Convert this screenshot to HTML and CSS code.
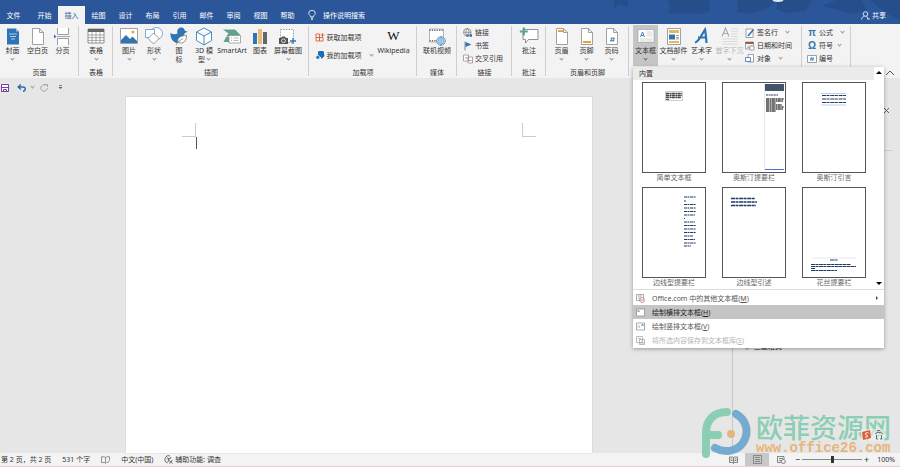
FILE: index.html
```html
<!DOCTYPE html>
<html lang="zh-CN">
<head>
  <meta charset="UTF-8">
  <title>Word</title>
  <meta name="viewport" content="width=device-width, initial-scale=1.0">
  <link rel="stylesheet" href="styles.css">
</head>
<body>

  <!-- Title bar and tabs -->
  <header class="topbar">
    <svg class="topbar-art" width="300" height="24" viewBox="0 0 300 24">
      <path d="M14 0h14v7l-8-2-6 3zM68 0h41l1 11-8 3-34-1 2-6zM138 0h38l-7 8-18 6-14-2zM178 0h34l-6 11-22 2-8-4zM222 6l14-6h26l5 11-15 3zM270 0h30v20l-14-7z" fill="#264e8a"/>
      <path d="M173 0q5 2 10 0" stroke="#dfe7f3" stroke-width="2" fill="none"/>
    </svg>
    <nav class="tabs">
      <button class="tab tab-file">文件</button>
      <button class="tab">开始</button>
      <button class="tab active">插入</button>
      <button class="tab">绘图</button>
      <button class="tab">设计</button>
      <button class="tab">布局</button>
      <button class="tab">引用</button>
      <button class="tab">邮件</button>
      <button class="tab">审阅</button>
      <button class="tab">视图</button>
      <button class="tab">帮助</button>
    </nav>
    <label class="search">
      <svg width="8" height="10" viewBox="0 0 8 10" fill="none" stroke="#fff" stroke-width=".8"><path d="M2.700 7V6C1 5 .7 4 .7 3.400a3.300 3 0 0 1 6.600 0C7.300 4 7 5 5.300 6v1zM2.700 8h2.600M3 9.400h2"/></svg>
      <input type="text" placeholder="操作说明搜索" aria-label="操作说明搜索">
    </label>
    <button class="share">
      <svg width="9" height="9" viewBox="0 0 9 9" fill="none" stroke="#fff" stroke-width=".8"><circle cx="4.500" cy="3" r="2.300"/><path d="M.5 8.500C.8 6.500 2 5.500 3.500 5.200M5.500 5.200l2 3M6 8h2.800"/></svg>
      共享
    </button>
  </header>

  <!-- Ribbon -->
  <div class="ribbon">
    <section class="group g-pages">
      <div class="group-body">
        <button class="big">
          <svg width="20" height="20" viewBox="0 0 20 20"><path d="M4 2.500h9l3 3V18.500H4z" fill="#2e75b6"/><path d="M13 2.500v3h3" fill="#9cc3e6"/><path d="M6 8h8M7 10.500h6M8 13h4" stroke="#cfe2f3" stroke-width=".8"/></svg>
          <span>封面</span><i class="chev"></i>
        </button>
        <button class="big">
          <svg width="20" height="20" viewBox="0 0 20 20"><path d="M4.500 2.500h7l4 4v12h-11zM11.500 2.500v4h4" fill="#fff" stroke="#8a8a8a" stroke-width=".8"/></svg>
          <span>空白页</span>
        </button>
        <button class="big">
          <svg width="20" height="20" viewBox="0 0 20 20"><path d="M4.500 2v6.500h11V2M4.500 19v-6.500h11V19" fill="#fff" stroke="#8a8a8a" stroke-width=".8"/><path d="M4 10.500h13" stroke="#8a8a8a" stroke-width=".7"/><path d="M1 8.500l2.500 2-2.500 2z" fill="#2e75b6"/></svg>
          <span>分页</span>
        </button>
      </div>
      <h2>页面</h2>
    </section>

    <section class="group g-table">
      <div class="group-body">
        <button class="big">
          <svg width="20" height="20" viewBox="0 0 20 20"><path d="M2 3h16v14H2z" fill="#fff" stroke="#777" stroke-width=".8"/><path d="M2 3h16v3H2z" fill="#666"/><path d="M2 9h16M2 11.700h16M2 14.400h16M6 6v11M10 6v11M14 6v11" stroke="#888" stroke-width=".7"/></svg>
          <span>表格</span><i class="chev"></i>
        </button>
      </div>
      <h2>表格</h2>
    </section>

    <section class="group g-illus">
      <div class="group-body">
        <button class="big">
          <svg width="20" height="20" viewBox="0 0 20 20"><path d="M1.500 2.500h17v15h-17z" fill="#fff" stroke="#8a8a8a" stroke-width=".8"/><path d="M2 17v-3l5-5 4 4 2.500-2.500L18 15v2z" fill="#2e75b6"/><circle cx="14" cy="6" r="1.500" fill="#e8a33d"/></svg>
          <span>图片</span><i class="chev"></i>
        </button>
        <button class="big">
          <svg width="20" height="20" viewBox="0 0 20 20" fill="#fff" stroke="#4a8ac4" stroke-width=".7"><circle cx="12.500" cy="7.500" r="6"/><path d="M1.500 3.500h9v8h-9z"/><path d="M9.500 7l5.500 5.500-5.500 5.500L4 12.500z" stroke="#777"/></svg>
          <span>形状</span><i class="chev"></i>
        </button>
        <button class="big">
          <svg width="20" height="20" viewBox="0 0 20 20"><path d="M1.500 7c2.500 1.500 5 1.500 7 .5C7.500 4 9.500 1.500 12.300 1.500c2.200 0 3.400 1.400 3.500 3.200l3 1-3 1.300c-.3 1.500-1.300 2.500-1.300 3.500L8.500 17C4 16.500 1 12 1.500 7z" fill="#2e75b6"/><path d="M7 19l2-3C7.500 12 12 9.500 17.500 9.500 17.500 15 14 19 9 16l5-3.500" fill="#fff" stroke="#777" stroke-width=".8"/></svg>
          <span>图<br>标</span>
        </button>
        <button class="big">
          <svg width="20" height="20" viewBox="0 0 20 20" fill="#fff" stroke="#2e86c1" stroke-width=".9"><path d="M10 2l7.500 4v8.500L10 19l-7.500-4.500V6zM2.500 6l7.500 4 7.500-4M10 10v9"/></svg>
          <span>3D 模<br>型 <i class="chev"></i></span>
        </button>
        <button class="big wide">
          <svg width="20" height="20" viewBox="0 0 20 20"><path d="M1 3.500h12l5 5-2 2H4l2.500-3z" fill="#5fa58c"/><path d="M4 11h4v5H1.500z" fill="#5fa58c"/><path d="M7 9.500h11.500v7.500H7z" fill="#fff" stroke="#8a8a8a" stroke-width=".7"/><path d="M9 12h1M11.500 12h5M9 14.500h1M11.500 14.500h5" stroke="#999" stroke-width=".7"/></svg>
          <span>SmartArt</span>
        </button>
        <button class="big">
          <svg width="20" height="20" viewBox="0 0 20 20"><path d="M3 7h4v11H3z" fill="#2e75b6"/><path d="M8 3h4v15H8z" fill="#e8bd73"/><path d="M13 6h4v12h-4z" fill="#666"/></svg>
          <span>图表</span>
        </button>
        <button class="big wide">
          <svg width="20" height="20" viewBox="0 0 20 20"><path d="M2.500 3.500h13v13h-13z" fill="#fff" stroke="#777" stroke-width=".7" stroke-dasharray="1.500 1.200"/><path d="M1 12h2l1-1.500h3L8 12h2v6H1z" fill="#555"/><circle cx="5.500" cy="14.800" r="1.900" fill="#555" stroke="#fff" stroke-width=".8"/><path d="M12 15h6M15 12v6" stroke="#2e75b6" stroke-width="1.300"/></svg>
          <span>屏幕截图</span><i class="chev"></i>
        </button>
      </div>
      <h2>插图</h2>
    </section>

    <section class="group g-addins">
      <div class="group-body">
        <div class="rows two">
          <button class="small">
            <svg width="10" height="10" viewBox="0 0 10 10" fill="none" stroke="#d9603b" stroke-width=".9"><path d="M1 2h3.500v3.500H1zM1 5.500h3.500V9H1zM4.500 5.500H8V9H4.500zM5.500 3h4M7.500 1v4"/></svg>
            <span>获取加载项</span>
          </button>
          <button class="small">
            <svg width="10" height="10" viewBox="0 0 10 10"><path d="M3.500 1h5l1 5-3 3-1-3-2.500-1z" fill="#1b6fb8"/><circle cx="6" cy="4" r="3" fill="#1b6fb8"/><circle cx="2.800" cy="7.300" r="1.900" fill="#1b6fb8" stroke="#f3f3f3" stroke-width=".6"/></svg>
            <span>我的加载项</span><i class="chev far"></i>
          </button>
        </div>
        <button class="big wiki">
          <span class="wiki-w">W</span>
          <span>Wikipedia</span>
        </button>
      </div>
      <h2>加载项</h2>
    </section>

    <section class="group g-media">
      <div class="group-body">
        <button class="big wide">
          <svg width="20" height="20" viewBox="0 0 20 20"><path d="M2.500 3h14v13h-14z" fill="#fff" stroke="#999" stroke-width=".7"/><path d="M2.500 4.300h14M2.500 14.700h8" stroke="#666" stroke-width="1.400" stroke-dasharray="1.200 1.200"/><circle cx="14" cy="15" r="4.300" fill="#fff" stroke="#3f86bf" stroke-width=".8"/><path d="M9.700 15h8.600M14 10.700v8.600M10.500 13h7M10.500 17h7M14 10.700c-3 2-3 6.600 0 8.600c3-2 3-6.600 0-8.600" fill="none" stroke="#3f86bf" stroke-width=".6"/></svg>
          <span>联机视频</span>
        </button>
      </div>
      <h2>媒体</h2>
    </section>

    <section class="group g-links">
      <div class="group-body">
        <div class="rows">
          <button class="small">
            <svg width="10" height="10" viewBox="0 0 10 10" fill="none" stroke="#777" stroke-width=".7"><circle cx="4.300" cy="4.300" r="3.800"/><path d="M.5 4.300h7.600M4.300.5c-2 2-2 5.500 0 7.600M4.300.5c2 2 2 4 1 6"/><path d="M3.500 7.500h2M6.500 7.500h2.500" stroke="#2e75b6" stroke-width="2.400"/></svg>
            <span>链接</span>
          </button>
          <button class="small">
            <svg width="10" height="10" viewBox="0 0 10 10"><path d="M2 .500v9" stroke="#888"/><path d="M2.500 1l6 2.500-6 2.500z" fill="#2e75b6"/></svg>
            <span>书签</span>
          </button>
          <button class="small">
            <svg width="10" height="10" viewBox="0 0 10 10" fill="#fff" stroke="#888" stroke-width=".7"><path d="M.5 1h5v6h-5zM5 3h4.500v6H5z"/><path d="M2 4h3M6 6.500h2.500" stroke="#c0504d"/></svg>
            <span>交叉引用</span>
          </button>
        </div>
      </div>
      <h2>链接</h2>
    </section>

    <section class="group g-comment">
      <div class="group-body">
        <button class="big">
          <svg width="20" height="20" viewBox="0 0 20 20"><path d="M4 3.500h15v10H9.500l-3 3.500v-3.500H4z" fill="#fff" stroke="#777" stroke-width=".8"/><path d="M.8 5.500h8M4.800 1.500v8" stroke="#5fa58c" stroke-width="2.200"/></svg>
          <span>批注</span>
        </button>
      </div>
      <h2>批注</h2>
    </section>

    <section class="group g-hf">
      <div class="group-body">
        <button class="big">
          <svg width="20" height="20" viewBox="0 0 20 20"><path d="M4.500 2.500h7l4 4v12h-11zM11.500 2.500v4h4" fill="#fff" stroke="#8a8a8a" stroke-width=".8"/><path d="M6 4h5v2H6z" fill="#e8a33d"/></svg>
          <span>页眉</span><i class="chev"></i>
        </button>
        <button class="big">
          <svg width="20" height="20" viewBox="0 0 20 20"><path d="M4.500 2.500h7l4 4v12h-11zM11.500 2.500v4h4" fill="#fff" stroke="#8a8a8a" stroke-width=".8"/><path d="M6 15h8v2H6z" fill="#e8a33d"/></svg>
          <span>页脚</span><i class="chev"></i>
        </button>
        <button class="big">
          <svg width="20" height="20" viewBox="0 0 20 20"><path d="M4.500 2.500h7l4 4v12h-11zM11.500 2.500v4h4" fill="#fff" stroke="#8a8a8a" stroke-width=".8"/><path d="M10 11l-1 5M12 11l-1 5M8.500 12.700h4.500M8 14.500h4.500" stroke="#2e75b6" stroke-width=".7"/></svg>
          <span>页码</span><i class="chev"></i>
        </button>
      </div>
      <h2>页眉和页脚</h2>
    </section>

    <section class="group g-text">
      <div class="group-body">
        <div class="dropdown">
          <button class="big pressed">
            <svg width="20" height="20" viewBox="0 0 20 20"><path d="M2 3.500h16v13H2z" fill="#fff" stroke="#999" stroke-width=".6"/><path d="M4.500 11L6.500 6l2 5M5.200 9.500h2.600" stroke="#2e75b6" fill="none" stroke-width=".9"/><path d="M10.500 6h6M10.500 8h6M10.500 10h6M4 13h12.500M4 15h12.500" stroke="#ccc" stroke-width=".8"/></svg>
            <span>文本框</span><i class="chev"></i>
          </button>

          <!-- Text box gallery -->
          <div class="menu">
            <div class="gallery">
              <h3>内置</h3>
              <div class="thumbs">
                <button class="thumb">
                  <svg width="64" height="91" viewBox="0 0 64 91"><path d="M23.500 9.500h17v9h-17z" fill="#fff" stroke="#aaa" stroke-width=".6"/><path d="M24 11.500h16M24 13.500h16M24 15.500h15" stroke="#444" stroke-width="1.300" stroke-dasharray="3 .5 2 .4"/><path d="M24 17.500h3" stroke="#555"/></svg>
                  <span>简单文本框</span>
                </button>
                <button class="thumb">
                  <svg width="64" height="91" viewBox="0 0 64 91"><path d="M42.500 2v86" stroke="#d5dbe6" stroke-width=".6"/><path d="M43 2h19v7H43z" fill="#44546a"/><path d="M44 13h12" stroke="#1f3864" stroke-dasharray="2 .6"/><path d="M44 17h18M44 19h17M44 21h10M44 23h16M44 25h18M44 27h17M44 29h10" stroke="#444" stroke-width="1.300" stroke-dasharray="3 .5 2 .4"/><path d="M43 87.500h19" stroke="#4472c4"/></svg>
                  <span>奥斯汀提要栏</span>
                </button>
                <button class="thumb">
                  <svg width="64" height="91" viewBox="0 0 64 91"><path d="M19 11.500h25M19 23h25" stroke="#a9bce0" stroke-width=".7"/><path d="M20 13.500h24M20 17h24M20 20.500h24" stroke="#1f3864" stroke-width="1.200" stroke-dasharray="4 .5 3 .8"/></svg>
                  <span>奥斯汀引言</span>
                </button>
                <button class="thumb">
                  <svg width="64" height="91" viewBox="0 0 64 91"><path d="M42 10h12M42 14h2M42 17.500h12M42 21h12M42 24.500h12M42 28h11M42 31.500h1M42 35h11M42 38.500h12M42 42h12M42 45.500h12M42 49h9M42 52.500h11M42 56h12M42 59h7" stroke="#1f3864" stroke-width="1.200" stroke-dasharray="3 .5 2 .6"/></svg>
                  <span>边线型提要栏</span>
                </button>
                <button class="thumb">
                  <svg width="64" height="91" viewBox="0 0 64 91"><path d="M9 11.500h24M9 15h26M9 18.500h25" stroke="#1f3864" stroke-width="1.300" stroke-dasharray="4 .5 3 .6"/></svg>
                  <span>边线型引述</span>
                </button>
                <button class="thumb">
                  <svg width="64" height="91" viewBox="0 0 64 91"><path d="M10 71h44" stroke="#d5dbe6" stroke-width=".6"/><path d="M28 73h8M9 77.500h40M9 79.500h45M9 81.500h4M9 83.500h26" stroke="#1f3864" stroke-width="1.200" stroke-dasharray="4 .4 3 .5"/></svg>
                  <span>花丝提要栏</span>
                </button>
              </div>
              <div class="scroll"><i class="up"></i><i class="down"></i></div>
            </div>
            <div class="menu-items">
              <button class="item">
                <svg width="9" height="9" viewBox="0 0 9 9" fill="#fff" stroke="#888" stroke-width=".7"><path d="M.5.500h7v6h-7zM2 2h4M2 4h3"/><circle cx="6" cy="6" r="2.400" stroke="#b66"/><path d="M4 6h4"/></svg>
                <span>Office.com 中的其他文本框(<u>M</u>)</span><i class="sub"></i>
              </button>
              <button class="item hover">
                <svg width="9" height="9" viewBox="0 0 9 9" fill="#fff" stroke="#888" stroke-width=".7"><path d="M.5 1h8v7h-8z"/><path d="M1.500 4l1-2 1 2" stroke="#2e75b6"/></svg>
                <span>绘制横排文本框(<u>H</u>)</span>
              </button>
              <button class="item">
                <svg width="9" height="9" viewBox="0 0 9 9" fill="#fff" stroke="#888" stroke-width=".7"><path d="M.5 1h8v7h-8z"/><path d="M5.500 4l1-2 1 2" stroke="#2e75b6"/><path d="M2 3v3M3.500 3v3" stroke="#bbb"/></svg>
                <span>绘制竖排文本框(<u>V</u>)</span>
              </button>
              <button class="item" disabled>
                <svg width="9" height="9" viewBox="0 0 9 9" fill="#fff" stroke="#aaa" stroke-width=".8"><path d="M.5.500h6v6h-6zM2 2.500h3M3.500 3.500h5v5h-5zM5 8V6h2v2"/></svg>
                <span>将所选内容保存到文本框库(<u>S</u>)</span>
              </button>
            </div>
          </div>
        </div>
        <button class="big wide">
          <svg width="20" height="20" viewBox="0 0 20 20"><path d="M3.500 2.500h13v16h-13z" fill="#fff" stroke="#8a8a8a" stroke-width=".8"/><path d="M5 4h10v3H5zM5 15h10v2H5z" fill="#e8b560"/><path d="M5 8.500h6v5H5z" fill="#2e75b6"/><path d="M12 9.500h3M12 11.500h3M12 13h3" stroke="#777" stroke-width=".7"/></svg>
          <span>文档部件</span><i class="chev"></i>
        </button>
        <button class="big">
          <svg width="20" height="20" viewBox="0 0 20 20" fill="none" stroke="#2e75b6" stroke-width="2.200"><path d="M3 16.500C7 16 10 8 13 3.500c1 4 1 8 1.500 13.500M6 11.500h8"/></svg>
          <span>艺术字</span><i class="chev"></i>
        </button>
        <button class="big wide" disabled>
          <svg width="20" height="20" viewBox="0 0 20 20" fill="none" stroke="#aaa" stroke-width="1.100"><path d="M2 10.500L5.500 2l3.500 8.500M3.300 7.500h4.400"/><path d="M11 3h7M11 5.500h7M11 8h7M11 10.500h7M2 13h16M2 15.500h16M2 18h16" stroke="#dcdcdc"/></svg>
          <span>首字下沉</span><i class="chev"></i>
        </button>
        <div class="rows">
          <button class="small">
            <svg width="10" height="10" viewBox="0 0 10 10"><path d="M1 1h7v8.500H1z" fill="#fff" stroke="#888" stroke-width=".8"/><path d="M3 8l5.500-6.500" stroke="#2e75b6" stroke-width="1.600"/></svg>
            <span>签名行</span><i class="chev far"></i>
          </button>
          <button class="small">
            <svg width="10" height="10" viewBox="0 0 10 10"><path d="M.5 1h8v7h-8z" fill="#fff" stroke="#888" stroke-width=".8"/><path d="M.5 1h8v2h-8z" fill="#a0584a"/><path d="M2 5h5M2 6.500h5" stroke="#999" stroke-width=".7"/><circle cx="7" cy="7" r="2.300" fill="#fff" stroke="#777" stroke-width=".7"/></svg>
            <span>日期和时间</span>
          </button>
          <button class="small">
            <svg width="10" height="10" viewBox="0 0 10 10" fill="#fff" stroke="#888" stroke-width=".8"><path d="M3 .5h5.500V8H3z"/><path d="M.5 3.500h5v4h-5z" stroke="#2e75b6"/></svg>
            <span>对象</span><i class="chev far"></i>
          </button>
        </div>
      </div>
      <h2>文本</h2>
    </section>

    <section class="group g-symbols">
      <div class="group-body">
        <div class="rows">
          <button class="small"><b class="glyph">π</b><span>公式</span><i class="chev far"></i></button>
          <button class="small"><b class="glyph">Ω</b><span>符号</span><i class="chev"></i></button>
          <button class="small">
            <svg width="10" height="10" viewBox="0 0 10 10"><path d="M.5 1.500h9v7h-9z" fill="#fff" stroke="#888" stroke-width=".8"/><path d="M4.500 3l-.7 4M6.200 3l-.7 4M3 4.300h4M3 5.700h4" stroke="#2e75b6" stroke-width=".6"/></svg>
            <span>编号</span>
          </button>
        </div>
      </div>
      <h2>符号</h2>
    </section>

    <button class="collapse" aria-label="折叠功能区">
      <svg width="10" height="6" viewBox="0 0 10 6" fill="none" stroke="#444" stroke-width=".9"><path d="M1 5l4-4 4 4"/></svg>
    </button>
  </div>

  <!-- Quick access -->
  <div class="quick">
    <button aria-label="保存"><svg width="8" height="8" viewBox="0 0 8 8"><path d="M.5.500h7v7h-7z" fill="#fff" stroke="#7b3fa0"/><path d="M.5 3.500h7M2.500 7.500v-2h3v2" stroke="#7b3fa0" fill="none"/></svg></button>
    <button aria-label="撤消"><svg width="10" height="8" viewBox="0 0 10 8" fill="none" stroke="#2b6cb0" stroke-width="1.400"><path d="M1 3h5c3 0 3 4 0 4.300M3.800.5L1.200 3l2.600 2.500"/></svg></button>
    <i class="chev"></i>
    <button class="redo" aria-label="重复"><svg width="8" height="8" viewBox="0 0 8 8" fill="none" stroke="#a0a0a0"><path d="M5.500 1.200A3.200 3.200 0 1 0 7.200 4M4.500.5h3V3"/></svg></button>
    <button class="more" aria-label="自定义"><svg width="5" height="5" viewBox="0 0 5 5"><path d="M1 .5h3" stroke="#555" stroke-width=".7"/><path d="M.5 2h4l-2 2z" fill="#555"/></svg></button>
  </div>

  <!-- Document -->
  <main class="workspace">
    <div class="editor">
      <article class="page">
        <i class="mark left"></i>
        <i class="mark right"></i>
        <i class="caret"></i>
      </article>
    </div>
    <aside class="pane">
      <div class="pane-head"><button class="close" aria-label="关闭"><svg width="7" height="7" viewBox="0 0 7 7" stroke="#555" stroke-width=".9"><path d="M1 1l5 5M6 1L1 6"/></svg></button></div>
      <p class="pane-item">▷ 三级格式</p>
    </aside>
  </main>

  <footer class="status">
    <span class="s-page">第 2 页，共 2 页</span>
    <span class="s-words">531 个字</span>
    <svg class="s-proof" width="9" height="8" viewBox="0 0 9 8" fill="none" stroke="#666" stroke-width=".7"><path d="M4.500 1.500v6M.5.800h3l1 .7 1-.7h3V4M.5.800V6.500h3l1 1M5.500 6l1 1 2-2.500"/></svg>
    <span class="s-lang">中文(中国)</span>
    <svg width="9" height="9" viewBox="0 0 9 9" fill="none" stroke="#444" stroke-width=".8"><path d="M6 1A3.600 3.600 0 1 0 3.500 8M3 3l3 1 1-2M4.500 4l-.5 3M4.500 5l4 3.500M8.500 5L5.500 8.500"/></svg>
    <span class="s-access">辅助功能: 调查</span>
    <div class="views">
      <button aria-label="阅读视图"><svg width="9" height="8" viewBox="0 0 9 8" fill="none" stroke="#666" stroke-width=".8"><path d="M4.500 1v6.500M.5 1h3.200l.8.700.8-.7h3.200v5.500H5.300l-.8.700-.8-.7H.5zM1.500 3h2M1.500 4.500h2M5.500 3h2M5.500 4.500h2"/></svg></button>
      <button class="on" aria-label="页面视图"><svg width="9" height="9" viewBox="0 0 9 9" fill="none" stroke="#777" stroke-width=".8"><path d="M.5.500h8v8h-8zM2 2.500h5M2 4.500h5M2 6.500h5"/></svg></button>
      <button aria-label="Web 视图"><svg width="9" height="8" viewBox="0 0 9 8" fill="none" stroke="#666" stroke-width=".8"><path d="M7 3V.5H.5v6H4M2 2.500h4M2 4.500h2"/><circle cx="6.300" cy="5.500" r="2"/></svg></button>
    </div>
    <div class="zoom">
      <button aria-label="缩小">−</button>
      <input type="range" min="0" max="100" value="50" aria-label="缩放">
      <button aria-label="放大">+</button>
      <span>100%</span>
    </div>
  </footer>

  <!-- Site watermark -->
  <div class="watermark">
    <svg width="52" height="52" viewBox="0 0 52 52" fill="none" stroke-width="8" stroke-linecap="round">
      <path d="M27 5C14 5 6 13 6 26v21M6 28h12" stroke="#86cdb1"/>
      <path d="M36 7c9 5 13 15 9 25c-5 12-19 15-30 9" stroke="#6fa8d0"/>
      <circle cx="31" cy="27" r="4" fill="#e5b37a"/>
    </svg>
    <div class="wm-text">
      <strong>欧菲资源网</strong>
      <span>www.office26.com</span>
    </div>
    <svg class="ime" width="24" height="12" viewBox="0 0 24 12"><path d="M0 0h24v12H0z" fill="#f4f4f4" fill-opacity=".6"/><path d="M1 3l8-2 1 8-8 2z" fill="#e0562b"/><path d="M7.500 4C4 3 3.500 5.500 5.500 6s1.500 2.500-1.500 2" stroke="#fff" fill="none"/><path d="M14 5l3-2q1 1.500 2 0l3 2M15.500 6v4h1.500M20.500 6v4H19M16 1.500h3" stroke="#555" stroke-width=".9" fill="none"/></svg>
  </div>

</body>
</html>
```
FILE: styles.css
```css
* {
  box-sizing: border-box;
}

body {
  margin: 0;
  min-height: 100vh;
  display: flex;
  flex-direction: column;
  position: relative;
  font-family: 'Noto Sans', 'Noto Sans CJK SC', sans-serif;
  font-size: 7px;
  line-height: 9px;
  color: #333;
  background: #e6e6e6;
  overflow: hidden;
}

button, input {
  font: inherit;
  color: inherit;
  background: none;
  border: none;
  padding: 0;
  margin: 0;
}

button {
  white-space: nowrap;
}

svg {
  display: block;
  flex: none;
}

h2, h3, p {
  margin: 0;
  font-size: 7px;
  font-weight: normal;
}

/* top bar */
.topbar {
  position: relative;
  display: flex;
  align-items: flex-end;
  height: 24px;
  background: #2b579a;
  color: white;
}

.topbar-art {
  position: absolute;
  right: 0;
  top: 0;
}

.tabs {
  display: flex;
}

.tab {
  width: 27px;
  height: 18px;
}

.tab-file {
  margin-right: 4px;
}

.tab.active {
  background: #f3f3f3;
  color: #2b579a;
}

.search {
  display: flex;
  align-items: center;
  gap: 7px;
  height: 18px;
  margin-left: 7px;
}

.search input {
  width: 60px;
}

.search input::placeholder {
  color: white;
  opacity: 1;
}

.share {
  position: relative;
  display: flex;
  align-items: center;
  gap: 2px;
  height: 18px;
  margin-left: auto;
  margin-right: 14px;
}

/* ribbon */
.ribbon {
  display: flex;
  height: 54px;
  background: #f3f3f3;
}

.group {
  display: flex;
  flex-direction: column;
  flex: none;
  position: relative;
  padding-top: 1px;
}

.group::after {
  content: "";
  position: absolute;
  right: 0;
  top: 2px;
  bottom: 2px;
  border-right: 1px solid #cfcfcf;
}

.group-body {
  display: flex;
  justify-content: center;
  height: 42px;
}

.group h2 {
  margin-top: 1px;
  text-align: center;
}

.g-pages { width: 79px; }
.g-table { width: 34px; }
.g-illus { width: 196px; }
.g-addins { width: 108px; }
.g-media { width: 40px; }
.g-links { width: 55px; }
.g-comment { width: 34px; }
.g-hf { width: 83px; }
.g-text { width: 173px; }
.g-symbols { width: 49px; }

.g-pages .group-body {
  justify-content: flex-start;
}

.g-illus .group-body,
.g-hf .group-body {
  padding-right: 2px;
}

.g-text .group-body {
  justify-content: flex-start;
  padding-left: 4px;
}

.big {
  display: flex;
  flex-direction: column;
  align-items: center;
  width: 25px;
  height: 41px;
  padding-top: 1px;
}

.big.wide {
  width: 31px;
}

.big.pressed {
  background: #c5c5c5;
}

.big[disabled] {
  color: #b5b5b5;
}

.chev {
  display: inline-block;
  width: 3px;
  height: 3px;
  margin: 1px auto 0;
  border-right: 1px solid #999;
  border-bottom: 1px solid #999;
  transform: rotate(45deg);
}

.big > .chev {
  margin-top: 2px;
}

.pressed > .chev {
  border-color: #666;
}

.big span .chev {
  margin-bottom: 2px;
}

.rows {
  display: flex;
  flex-direction: column;
  padding-top: 1px;
  margin-left: 3px;
}

.rows.two {
  padding-top: 3px;
}

.small {
  display: flex;
  align-items: center;
  gap: 2px;
  height: 13px;
  text-align: left;
}

.rows.two .small {
  height: 18px;
}

.small .chev {
  margin: 0 0 2px 3px;
}

.small .chev.far {
  margin-left: 6px;
}

.g-links .rows,
.g-symbols .rows {
  width: 100%;
  padding-left: 3px;
}

.g-symbols .rows {
  padding-left: 2px;
}

.g-text .rows {
  margin-left: 0;
}

.big.wiki {
  width: 42px;
}

.wiki-w {
  height: 20px;
  font-family: 'Liberation Serif', serif;
  font-size: 13px;
  line-height: 20px;
  color: #111;
}

.glyph {
  width: 10px;
  font-family: 'Liberation Sans', sans-serif;
  font-size: 10px;
  text-align: center;
  color: #2e75b6;
}

.collapse {
  align-self: flex-end;
  margin: 0 5px 2px auto;
}

/* text box menu */
.dropdown {
  position: relative;
}

.menu {
  position: absolute;
  z-index: 5;
  left: 0;
  top: 42px;
  width: 251px;
  background: white;
  box-shadow: 0 1px 4px rgba(0,0,0,0.35);
}

.gallery {
  position: relative;
  height: 223px;
  border-bottom: 1px solid #dcdcdc;
}

.gallery h3 {
  height: 13px;
  line-height: 13px;
  margin-right: 10px;
  padding-left: 6px;
  background: #ebebeb;
}

.thumbs {
  display: grid;
  grid-template-columns: repeat(3, 64px);
  column-gap: 16px;
  row-gap: 4px;
  padding: 2px 9px 0;
}

.thumb {
  color: #666;
}

.thumb svg {
  outline: 1px solid #555;
  outline-offset: -1px;
  background: white;
}

.thumb span {
  display: block;
  height: 10px;
  line-height: 10px;
}

.scroll {
  position: absolute;
  right: 2px;
  top: 4px;
  bottom: 4px;
  display: flex;
  flex-direction: column;
  justify-content: space-between;
}

.up, .down {
  border: 3px solid transparent;
}

.up {
  border-top: none;
  border-bottom-color: black;
}

.down {
  border-bottom: none;
  border-top-color: black;
}

.item {
  display: flex;
  align-items: center;
  gap: 7px;
  width: 100%;
  height: 14px;
  padding-left: 3px;
  color: #555;
}

.menu-items {
  padding: 1px 0;
}

.item.hover {
  background: #c5c5c5;
  color: #222;
}

.item[disabled] {
  color: #b5b5b5;
}

.sub {
  margin: 0 6px 0 auto;
  border: 2px solid transparent;
  border-right: none;
  border-left-color: #444;
}

/* quick access */
.quick {
  display: flex;
  align-items: center;
  height: 19px;
  gap: 8px;
  padding-left: 1px;
}

.quick .chev {
  margin: 0 0 2px -4px;
}

.quick .redo {
  margin-left: -2px;
}

.quick .more {
  margin-left: 2px;
}

/* document */
.workspace {
  display: flex;
  flex: 1;
}

.editor {
  display: flex;
  justify-content: center;
  flex: 1;
  padding-right: 14px;
}

.page {
  position: relative;
  width: 466px;
  background: white;
  box-shadow: 0 0 1px #aaa;
}

.mark {
  position: absolute;
  top: 26px;
  width: 14px;
  height: 14px;
  border-bottom: 1px solid #ccc;
}

.mark.left {
  left: 56px;
  border-right: 1px solid #ccc;
}

.mark.right {
  right: 56px;
  border-left: 1px solid #ccc;
}

.caret {
  position: absolute;
  left: 70px;
  top: 40px;
  height: 12px;
  border-left: 1px solid #555;
}

.pane {
  width: 168px;
  border-left: 1px solid #c8c8c8;
}

.pane-head {
  display: flex;
  justify-content: flex-end;
  height: 54px;
  margin-right: 7px;
  padding: 10px 3px 0 0;
  border-bottom: 1px solid #cfcfcf;
}

.close {
  height: 7px;
}

.pane-item {
  margin-top: 191px;
  padding-left: 12px;
  color: #222;
}

/* status bar */
.status {
  display: flex;
  align-items: center;
  height: 14px;
  padding-left: 1px;
  background: #f3f3f3;
  border-bottom: 1px solid #e8cfcb;
}

.s-page, .s-words, .s-proof, .s-lang {
  margin-right: 11px;
}

.s-access {
  margin-left: 2px;
}

.views {
  display: flex;
  margin-left: auto;
}

.views button {
  display: flex;
  align-items: center;
  justify-content: center;
  width: 24px;
  height: 13px;
}

.views .on {
  background: #c8c8c8;
}

.zoom {
  display: flex;
  align-items: center;
  padding-right: 5px;
}

.zoom button {
  width: 9px;
  font-size: 9px;
}

.zoom input {
  appearance: none;
  width: 60px;
  height: 7px;
  background: linear-gradient(#888, #888) center / 100% 1px no-repeat;
}

.zoom input::-webkit-slider-thumb {
  appearance: none;
  width: 3px;
  height: 7px;
  background: #333;
}

.zoom span {
  margin-left: 6px;
}

/* watermark */
.watermark {
  position: absolute;
  right: 9px;
  bottom: 8px;
  display: flex;
  gap: 4px;
  opacity: 0.95;
}

.wm-text strong {
  display: block;
  font-size: 27px;
  line-height: 32px;
  margin-top: 5px;
  font-weight: 500;
  color: #86cdb1;
}

.wm-text span {
  display: block;
  font-family: 'Liberation Mono', monospace;
  font-size: 14px;
  font-weight: bold;
  line-height: 9px;
  color: #e5b37a;
}

.ime {
  position: absolute;
  right: 6px;
  top: 22px;
}
```
